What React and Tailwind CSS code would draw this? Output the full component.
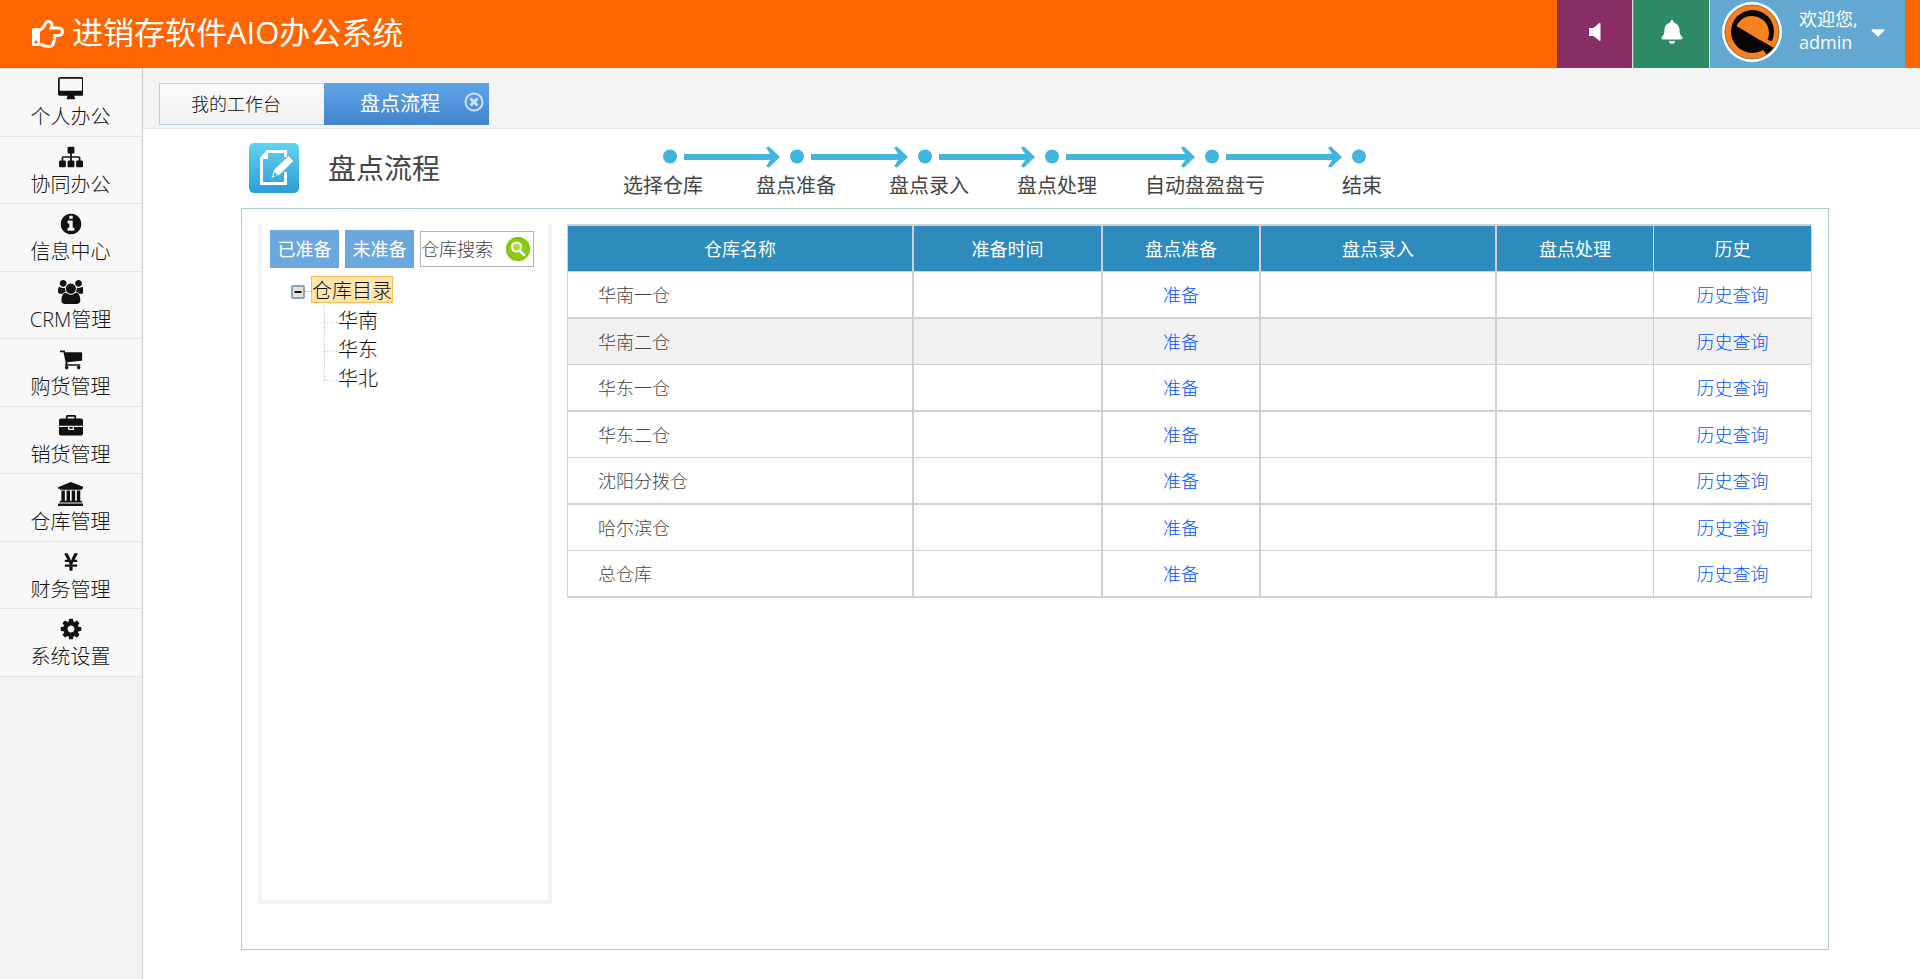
import React, { useState } from 'react';
import { FaRegHandPointRight, FaBell, FaYenSign, FaCaretDown } from 'react-icons/fa';

const Icon = ({ w = 1792, d }) => (
  <svg viewBox={`0 0 ${w} 1792`} className="h-6 w-auto" fill="currentColor" aria-hidden="true">
    <path d={d} />
  </svg>
);

const MENU = [
  { name: '个人办公', icon: <Icon w={1920} d="M1792 992v-832q0-13-9.5-22.5t-22.5-9.5h-1600q-13 0-22.5 9.5t-9.5 22.5v832q0 13 9.5 22.5t22.5 9.5h1600q13 0 22.5-9.5t9.5-22.5zm128-832v1088q0 66-47 113t-113 47h-544q0 37 16 77.5t32 71 16 43.5q0 26-19 45t-45 19h-512q-26 0-45-19t-19-45q0-14 16-44t32-70 16-78h-544q-66 0-113-47t-47-113v-1088q0-66 47-113t113-47h1600q66 0 113 47t47 113z" /> },
  { name: '协同办公', icon: <Icon d="M1792 1248v320q0 40-28 68t-68 28h-320q-40 0-68-28t-28-68v-320q0-40 28-68t68-28h96v-192h-512v192h96q40 0 68 28t28 68v320q0 40-28 68t-68 28h-320q-40 0-68-28t-28-68v-320q0-40 28-68t68-28h96v-192h-512v192h96q40 0 68 28t28 68v320q0 40-28 68t-68 28h-320q-40 0-68-28t-28-68v-320q0-40 28-68t68-28h96v-192q0-52 38-90t90-38h512v-192h-96q-40 0-68-28t-28-68v-320q0-40 28-68t68-28h320q40 0 68 28t28 68v320q0 40-28 68t-68 28h-96v192h512q52 0 90 38t38 90v192h96q40 0 68 28t28 68z" /> },
  { name: '信息中心', icon: <Icon d="M1152 1376v-160q0-14-9-23t-23-9h-96v-512q0-14-9-23t-23-9h-320q-14 0-23 9t-9 23v160q0 14 9 23t23 9h96v320h-96q-14 0-23 9t-9 23v160q0 14 9 23t23 9h448q14 0 23-9t9-23zm-128-896v-160q0-14-9-23t-23-9h-192q-14 0-23 9t-9 23v160q0 14 9 23t23 9h192q14 0 23-9t9-23zm640 416q0 209-103 385.5t-279.5 279.5-385.5 103-385.5-103-279.5-279.5-103-385.5 103-385.5 279.5-279.5 385.5-103 385.5 103 279.5 279.5 103 385.5z" /> },
  { name: 'CRM管理', icon: <Icon w={1920} d="M593 896q-162 5-265 128h-134q-82 0-138-40.5t-56-118.5q0-353 124-353 6 0 43.5 21t97.5 42.5 119 21.5q67 0 133-23-5 37-5 66 0 139 81 256zm1071 637q0 120-73 189.5t-194 69.5h-874q-121 0-194-69.5t-73-189.5q0-53 3.5-103.5t14-109 26.5-108.5 43-97.5 62-81 85.5-53.5 111.5-20q10 0 43 21.5t73 48 107 48 135 21.5 135-21.5 107-48 73-48 43-21.5q61 0 111.5 20t85.5 53.5 62 81 43 97.5 26.5 108.5 14 109 3.5 103.5zm-1024-1277q0 106-75 181t-181 75-181-75-75-181 75-181 181-75 181 75 75 181zm704 384q0 159-112.5 271.5t-271.5 112.5-271.5-112.5-112.5-271.5 112.5-271.5 271.5-112.5 271.5 112.5 112.5 271.5zm576 225q0 78-56 118.5t-138 40.5h-134q-103-123-265-128 81-117 81-256 0-29-5-66 66 23 133 23 59 0 119-21.5t97.5-42.5 43.5-21q124 0 124 353zm-128-609q0 106-75 181t-181 75-181-75-75-181 75-181 181-75 181 75 75 181z" /> },
  { name: '购货管理', icon: <Icon d="M704 1536q0 52-38 90t-90 38-90-38-38-90 38-90 90-38 90 38 38 90zm896 0q0 52-38 90t-90 38-90-38-38-90 38-90 90-38 90 38 38 90zm128-1088v512q0 24-16.5 42.5t-40.5 21.5l-1044 122q13 60 13 70 0 16-24 64h920q26 0 45 19t19 45-19 45-45 19h-1024q-26 0-45-19t-19-45q0-11 8-31.5t16-36 21.5-40 15.5-29.5l-177-823h-204q-26 0-45-19t-19-45 19-45 45-19h256q16 0 28.5 6.5t19.5 15.5 13 24.5 8 26 5.5 29.5 4.5 26h1201q26 0 45 19t19 45z" /> },
  { name: '销货管理', icon: <Icon d="M640 256h512v-128h-512v128zm1152 640v480q0 66-47 113t-113 47h-1472q-66 0-113-47t-47-113v-480h672v160q0 26 19 45t45 19h320q26 0 45-19t19-45v-160h672zm-768 0v128h-256v-128h256zm768-480v384h-1792v-384q0-66 47-113t113-47h352v-160q0-40 28-68t68-28h576q40 0 68 28t28 68v160h352q66 0 113 47t47 113z" /> },
  { name: '仓库管理', icon: <Icon w={1920} d="M960 0l960 384v128h-128q0 26-20.5 45t-48.5 19h-1526q-28 0-48.5-19t-20.5-45h-128v-128zm-704 640h256v768h128v-768h256v768h128v-768h256v768h128v-768h256v768h59q28 0 48.5 19t20.5 45v64h-1664v-64q0-26 20.5-45t48.5-19h59v-768zm1595 960q28 0 48.5 19t20.5 45v128h-1920v-128q0-26 20.5-45t48.5-19h1782z" /> },
  { name: '财务管理', icon: <FaYenSign className="h-5 w-auto" /> },
  { name: '系统设置', icon: <Icon d="M1152 896q0-106-75-181t-181-75-181 75-75 181 75 181 181 75 181-75 75-181zm512-109v222q0 12-8 23t-20 13l-185 28q-19 54-39 91 35 50 107 138 10 12 10 25t-9 23q-27 37-99 108t-94 71q-12 0-26-9l-138-108q-44 23-91 38-16 136-29 186-7 28-36 28h-222q-14 0-24.5-8.5t-11.5-21.5l-28-184q-49-16-90-37l-141 107q-10 9-25 9-14 0-25-11-126-114-165-168-7-10-7-23 0-12 8-23 15-21 51-66.5t54-70.5q-27-50-41-99l-183-27q-13-2-21-12.5t-8-23.5v-222q0-12 8-23t19-13l186-28q14-46 39-92-40-57-107-138-10-12-10-24 0-10 9-23 26-36 98.5-107.5t94.5-71.5q13 0 26 10l138 107q44-23 91-38 16-136 29-186 7-28 36-28h222q14 0 24.5 8.5t11.5 21.5l28 184q49 16 90 37l142-107q9-9 24-9 13 0 25 10 129 119 165 170 7 8 7 22 0 12-8 23-15 21-51 66.5t-54 70.5q26 50 41 98l183 28q13 2 21 12.5t8 23.5z" /> },
];

const STEPS = [
  { name: '选择仓库', gap: 'mr-[53px]' },
  { name: '盘点准备', gap: 'mr-[53px]' },
  { name: '盘点录入', gap: 'mr-12' },
  { name: '盘点处理', gap: 'mr-12' },
  { name: '自动盘盈盘亏', gap: 'mr-[77px]' },
  { name: '结束', gap: '' },
];

// 流程圆点的横坐标
const DOTS = [8, 135, 263, 390, 550, 697];

const COLUMNS = [
  { name: '仓库名称', width: 'w-[346px]', line: 'border-r-2' },
  { name: '准备时间', width: 'w-[189px]', line: 'border-r-2' },
  { name: '盘点准备', width: 'w-[158px]', line: 'border-r-2' },
  { name: '盘点录入', width: 'w-[236px]', line: 'border-r-2' },
  { name: '盘点处理', width: 'w-[157px]', line: 'border-r' },
  { name: '历史', width: 'w-[158px]', line: 'border-r' },
];

const WAREHOUSES = ['华南一仓', '华南二仓', '华东一仓', '华东二仓', '沈阳分拨仓', '哈尔滨仓', '总仓库'];

function Header() {
  return (
    <header className="flex h-[68px] items-stretch justify-between bg-[#ff6600] pr-[15px] text-white">
      <h1 className="flex items-center gap-2 pl-8 text-[31px] leading-[64px]">
        <FaRegHandPointRight className="h-8 w-8" />
        <span className="pb-1">进销存软件AIO办公系统</span>
      </h1>
      <div className="flex">
        <button type="button" aria-label="声音" className="mr-px flex w-[76px] items-center justify-center border-r border-[#ddd] bg-[#892e65]">
          <svg viewBox="0 0 12 18" className="-mt-1 h-[18px] w-3" fill="currentColor"><path d="M0 5.5Q0 5 .6 5H4.500L10 .300Q11.500-.5 11.500 1v16q0 1.500-1.500.6L4.500 13H.6q-.6 0-.6-.6z" /></svg>
        </button>
        <button type="button" aria-label="通知" className="flex w-[76px] items-center justify-center border-r border-[#ddd] bg-[#2e8965]">
          <FaBell className="-mt-1 h-6 w-6" />
        </button>
        <button type="button" className="flex w-[195px] items-start bg-[#62a8d1] pt-[2px] pl-3 text-left text-[18px] leading-[23px]">
          <Avatar />
          <span className="ml-[17px] w-[72px] pt-[6px]">欢迎您,<br />admin</span>
          <FaCaretDown className="mt-[18px] h-6 w-[14px]" />
        </button>
      </div>
    </header>
  );
}

function Avatar() {
  return (
    <svg viewBox="0 0 60 60" className="size-[60px] shrink-0" aria-hidden="true">
      <defs>
        <clipPath id="face"><circle cx="30" cy="30" r="27" /></clipPath>
      </defs>
      <circle cx="30" cy="30" r="30" fill="#fff" />
      <g clipPath="url(#face)">
        <rect width="60" height="60" fill="#f5821f" />
        <circle cx="30.500" cy="29.500" r="21.500" fill="#0a0502" />
        <path d="M14.500 24A17 17 0 0 1 45.500 38L56 41V49Z" fill="#f5821f" />
        <path d="M38 38L53 46.500L47 56L40.500 47Z" fill="#0a0502" />
      </g>
      <circle cx="30" cy="30" r="27" fill="none" stroke="#8a6a4a" strokeWidth="1" />
    </svg>
  );
}

function Sidebar() {
  return (
    <aside className="w-[143px] shrink-0 border-r border-[#ccc] bg-[#f2f2f2]">
      <nav className="mr-px grid h-[609px] grid-rows-9 border-t border-[#e5e5e5]">
        {MENU.map((item) => (
          <a key={item.name} href="#" className="flex flex-col items-center border-b border-[#e5e5e5] bg-[#f8f8f8] pt-2 text-[20px] leading-8 text-[#111]">
            <span className="flex h-6 items-center">{item.icon}</span>
            <span className="font-light">{item.name}</span>
          </a>
        ))}
      </nav>
    </aside>
  );
}

function Tabs() {
  return (
    <div className="flex h-[61px] items-start border-b border-[#e2e2e2] bg-[#f4f4f4] pt-[15px] pl-4">
      <button type="button" className="h-[42px] w-[165px] border border-r-0 border-[#b0d4f1] bg-linear-to-b from-[#fafafa] to-[#f1f1f1] pr-3 text-[18px] font-light text-[#111]">
        我的工作台
      </button>
      <div className="flex h-[42px] w-[165px] items-start bg-linear-to-b from-[#60a4e8] to-[#4284cd] text-white">
        <button type="button" className="h-[42px] pr-6 pl-9 text-[20px] whitespace-nowrap">盘点流程</button>
        <button type="button" aria-label="关闭" className="mt-[9px]">
          <svg viewBox="0 0 20 20" className="size-5" fill="none" stroke="#cfe2f6">
            <circle cx="10" cy="10" r="8.500" strokeWidth="2" />
            <path d="M6.500 6.500l7 7M13.500 6.500l-7 7" strokeWidth="3" />
          </svg>
        </button>
      </div>
    </div>
  );
}

function EditLogo() {
  return (
    <svg viewBox="0 0 50 50" className="size-[50px]" aria-hidden="true">
      <defs>
        <linearGradient id="logo" x1="0" y1="0" x2="0" y2="1">
          <stop offset="0" stopColor="#62d3ec" />
          <stop offset="1" stopColor="#2a9cd8" />
        </linearGradient>
      </defs>
      <rect width="50" height="50" rx="5" fill="url(#logo)" />
      <path d="M36.500 14V8.500H18.500L12.500 15V40.500H36.500V29" fill="none" stroke="#fff" strokeWidth="3" />
      <path d="M19 7v9h-8z" fill="#fff" />
      <path d="M39.500 12.500l5.500 5.500L30.500 32l-8.500 3.500 3-9z" fill="#fff" stroke="#48bbe4" strokeWidth="1" />
      <path d="M25.500 29l3 3-4 1.500z" fill="#43b4e0" />
    </svg>
  );
}

function Flow() {
  return (
    <div>
      <svg viewBox="0 0 706 22" className="ml-[39px] h-[22px] w-[706px]" fill="#42b4e0" aria-hidden="true">
        {DOTS.map((x, i) => (
          <g key={x}>
            <circle cx={x} cy="10.500" r="7" />
            {i < DOTS.length - 1 && (
              <>
                <rect x={x + 14} y="8" width={DOTS[i + 1] - x - 36} height="6" />
                <path d={`M${DOTS[i + 1] - 17} 11L${DOTS[i + 1] - 28} .5L${DOTS[i + 1] - 31} 1.500L${DOTS[i + 1] - 25} 11L${DOTS[i + 1] - 31} 20.500L${DOTS[i + 1] - 28} 21.500Z`} />
              </>
            )}
          </g>
        ))}
      </svg>
      <ol className="mt-1 flex text-[20px] leading-7 text-[#444]">
        {STEPS.map((s) => (
          <li key={s.name} className={`${s.gap} whitespace-nowrap`}>{s.name}</li>
        ))}
      </ol>
    </div>
  );
}

function WarehouseTree() {
  const [open, setOpen] = useState(true);
  return (
    <div className="h-[680px] w-[294px] shrink-0 border-4 border-t-0 border-[#f2f2f2] pt-[6px] pl-2">
      <div className="flex items-center gap-[6px] text-[18px]">
        <button type="button" className="h-[38px] w-[69px] bg-[#6ba8de] text-white">已准备</button>
        <button type="button" className="h-[38px] w-[69px] bg-[#6ba8de] text-white">未准备</button>
        <form className="flex h-9 w-[114px] items-center border border-[#b5b5b5] bg-white" onSubmit={(e) => e.preventDefault()}>
          <input type="text" aria-label="仓库搜索" placeholder="仓库搜索" className="w-[85px] font-light outline-none placeholder:text-[#444]" />
          <button type="submit" aria-label="搜索">
            <svg viewBox="0 0 24 24" className="size-6">
              <circle cx="12" cy="12" r="12" fill="#8ccb12" />
              <circle cx="12" cy="12" r="11" fill="none" stroke="#7fbf0a" strokeWidth="2" strokeDasharray="2 1" />
              <circle cx="10.500" cy="10" r="4.500" fill="#a5dc3c" stroke="#fff" strokeWidth="2" />
              <path d="M14 14l4 4" stroke="#fff" strokeWidth="2.500" strokeLinecap="round" />
            </svg>
          </button>
        </form>
      </div>
      <div className="mt-2 flex items-center pl-[21px] text-[20px] font-light text-[#111]">
        <button type="button" aria-label="展开或收起" onClick={() => setOpen(!open)} className="mt-1">
          <svg viewBox="0 0 14 14" className="size-[14px]">
            <rect x="1" y="1" width="12" height="12" rx="1" fill="#e6e2da" stroke="#8ba4bf" strokeWidth="2" />
            <path d="M3.500 7h7" stroke="#111" strokeWidth="2" />
          </svg>
        </button>
        <span className="mt-1 w-[6px] border-t border-dotted border-[#bbb]" />
        <a href="#" className="h-[27px] border border-[#ffb951] bg-[#ffe6b0] text-[20px] leading-[27px]">仓库目录</a>
      </div>
      {open && (
        <ul className="mt-[3px] ml-[54px] text-[20px] leading-[29px] font-light text-[#111]">
          {['华南', '华东', '华北'].map((name, i, all) => (
            <li key={name} className="flex">
              <svg viewBox="0 0 14 29" className="h-[29px] w-[14px]" stroke="#bbb" strokeDasharray="1 2" aria-hidden="true">
                <path d={i === all.length - 1 ? 'M.5 0v17' : 'M.5 0v29'} />
                <path d="M0 16.500h13" />
              </svg>
              <a href="#">{name}</a>
            </li>
          ))}
        </ul>
      )}
    </div>
  );
}

function StockTable() {
  return (
    <table className="w-full table-fixed border-separate border-spacing-0 border-t-2 border-l border-[#d0d0d0] text-[18px] leading-6">
      <thead>
        <tr className="h-[46px]">
          {COLUMNS.map((c) => (
            <th key={c.name} className={`${c.width} ${c.line} border-b border-[#d0d0d0] bg-[#2d8bbd] font-normal text-white`}>{c.name}</th>
          ))}
        </tr>
      </thead>
      <tbody>
        {WAREHOUSES.map((name, i) => {
          const cell = `border-[#d0d0d0] text-center font-light ${i % 2 ? 'border-b' : 'border-b-2'}`;
          return (
            <tr key={name} className={`${i % 2 ? 'h-[46px]' : 'h-[47px]'} ${i === 1 ? 'bg-[#f1f1f1]' : ''}`}>
              <td className={`${cell} border-r-2 pl-[30px] text-left! text-[#444]`}>{name}</td>
              <td className={`${cell} border-r-2`} />
              <td className={`${cell} border-r-2`}><a href="#" className="text-[#0055ff]">准备</a></td>
              <td className={`${cell} border-r-2`} />
              <td className={`${cell} border-r`} />
              <td className={`${cell} border-r`}><a href="#" className="text-[#0055ff]">历史查询</a></td>
            </tr>
          );
        })}
      </tbody>
    </table>
  );
}

export default function App() {
  return (
    <div className="flex min-h-screen flex-col bg-white font-['Open_Sans','Noto_Sans_CJK_SC',sans-serif]">
      <Header />
      <div className="flex flex-1">
        <Sidebar />
        <main className="min-w-0 flex-1">
          <Tabs />
          <div className="mr-[91px] ml-[98px]">
            <div className="flex h-[79px] items-start pt-[14px] pl-2">
              <EditLogo />
              <h2 className="ml-[29px] w-[295px] text-[28px] leading-[50px] text-[#444]">盘点流程</h2>
              <div className="pt-[3px]"><Flow /></div>
            </div>
            <section className="flex items-start gap-[15px] border border-[#b0c9d1] px-4 pt-[15px] pb-[45px]">
              <WarehouseTree />
              <StockTable />
            </section>
          </div>
        </main>
      </div>
    </div>
  );
}
